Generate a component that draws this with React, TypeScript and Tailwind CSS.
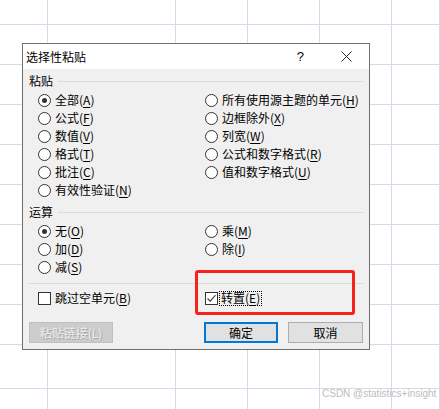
import React from "react";

const cjk = "font-['Microsoft_YaHei','Noto_Sans_CJK_SC',sans-serif]";

const colWidths = ["w-[48px]", "w-[128px]", "w-[72px]", "w-[72px]", "w-[72px]", "flex-1"];

const Label = ({ text, k }: { text: string; k: string }) => (
  <span className="whitespace-nowrap leading-none">
    {text}(<span className="underline underline-offset-2">{k}</span>)
  </span>
);

const Radio = ({ on }: { on?: boolean }) => (
  <span className="w-[13px] h-[13px] rounded-full border border-[#333] bg-white flex items-center justify-center shrink-0">
    {on && <span className="w-[5px] h-[5px] rounded-full bg-[#333]" />}
  </span>
);

const RadioItem = ({ text, k, on }: { text: string; k: string; on?: boolean }) => (
  <div className="h-[18px] flex items-center gap-[4px]">
    <Radio on={on} />
    <Label text={text} k={k} />
  </div>
);

const Check = ({ on }: { on?: boolean }) => (
  <span className="w-[13px] h-[13px] border border-[#333] bg-white shrink-0 flex items-center justify-center">
    {on && (
      <svg width="11" height="11" viewBox="0 0 11 11">
        <path d="M1.5 5.5 L4.2 8.2 L9.5 2.2" fill="none" stroke="#444" strokeWidth="1.2" />
      </svg>
    )}
  </span>
);

const Section = ({ title }: { title: string }) => (
  <div className="h-[18px] flex items-center pl-[6px] pr-[6px] gap-[5px]">
    <span className="leading-none">{title}</span>
    <span className="flex-1 h-px bg-[#dcdcdc]" />
  </div>
);

export default function App() {
  const rows = Array.from({ length: 11 });
  return (
    <div className={`relative w-[440px] h-[409px] bg-white overflow-hidden ${cjk} text-[12px] text-black`}>
      {/* spreadsheet grid */}
      <div className="flex flex-col">
        {rows.map((_, r) => (
          <div key={r} className={`flex ${r === 0 ? "h-[25px]" : r === 9 ? "h-[44px]" : "h-[40px]"}`}>
            {colWidths.map((w, c) => (
              <div key={c} className={`${w} border-b border-r border-[#d4dae6]`} />
            ))}
          </div>
        ))}
      </div>

      {/* dialog */}
      <div className="absolute left-[22px] top-[43px] w-[348px] h-[307px] border border-[#707070] bg-[#f0f0f0] flex flex-col">
        <div className="h-[25px] bg-white flex items-center pl-[3px] pr-[17px]">
          <span className="text-[12px] leading-none">选择性粘贴</span>
          <span className="ml-auto mr-[37px] text-[13px] leading-none font-['Liberation_Sans',sans-serif]">?</span>
          <svg width="11" height="11" viewBox="0 0 11 11">
            <path d="M0.5 0.5 L10.5 10.5 M10.5 0.5 L0.5 10.5" stroke="#222" strokeWidth="1" />
          </svg>
        </div>

        <div className="pt-[3px]">
          <Section title="粘贴" />
          <div className="mt-[1px] pl-[15px] flex">
            <div className="w-[167px] flex flex-col">
              <RadioItem text="全部" k="A" on />
              <RadioItem text="公式" k="F" />
              <RadioItem text="数值" k="V" />
              <RadioItem text="格式" k="T" />
              <RadioItem text="批注" k="C" />
              <RadioItem text="有效性验证" k="N" />
            </div>
            <div className="flex flex-col">
              <RadioItem text="所有使用源主题的单元" k="H" />
              <RadioItem text="边框除外" k="X" />
              <RadioItem text="列宽" k="W" />
              <RadioItem text="公式和数字格式" k="R" />
              <RadioItem text="值和数字格式" k="U" />
            </div>
          </div>

          <div className="mt-[4px]">
            <Section title="运算" />
          </div>
          <div className="mt-[1px] pl-[15px] flex">
            <div className="w-[167px] flex flex-col">
              <RadioItem text="无" k="O" on />
              <RadioItem text="加" k="D" />
              <RadioItem text="减" k="S" />
            </div>
            <div className="flex flex-col">
              <RadioItem text="乘" k="M" />
              <RadioItem text="除" k="I" />
            </div>
          </div>

          <div className="mt-[7px] mx-[6px] h-px bg-[#dcdcdc]" />

          <div className="mt-[5px] pl-[15px] flex h-[18px] items-center">
            <div className="w-[167px] flex items-center gap-[4px]">
              <Check />
              <Label text="跳过空单元" k="B" />
            </div>
            <div className="flex items-center gap-[1px]">
              <Check on />
              <span className="border border-dotted border-black px-[1px] h-[15px] flex items-center">
                <Label text="转置" k="E" />
              </span>
            </div>
          </div>

          <div className="mt-[15px] pl-[6px] flex items-center">
            <div className="w-[84px] h-[21px] bg-[#cccccc] border border-[#bfbfbf] flex items-center justify-center text-[#eeeeee] [text-shadow:1px_1px_0_#a3a3a3]">
              粘贴链接(L)
            </div>
            <div className="ml-[91px] w-[74px] h-[21px] bg-[#e1e1e1] border-2 border-[#0078d7] flex items-center justify-center">
              确定
            </div>
            <div className="ml-[10px] w-[75px] h-[21px] bg-[#e1e1e1] border border-[#adadad] flex items-center justify-center">
              取消
            </div>
          </div>
        </div>

        {/* annotation */}
        <div className="absolute left-[172px] top-[226px] w-[160px] h-[45px] border-[3px] border-[#f5231b] rounded-[3px]" />
      </div>

      <div className="absolute left-[322px] top-[389px] text-[10px] leading-none text-[#bdbdbd] font-['Liberation_Sans',sans-serif]">
        CSDN @statistics+insight
      </div>
    </div>
  );
}
